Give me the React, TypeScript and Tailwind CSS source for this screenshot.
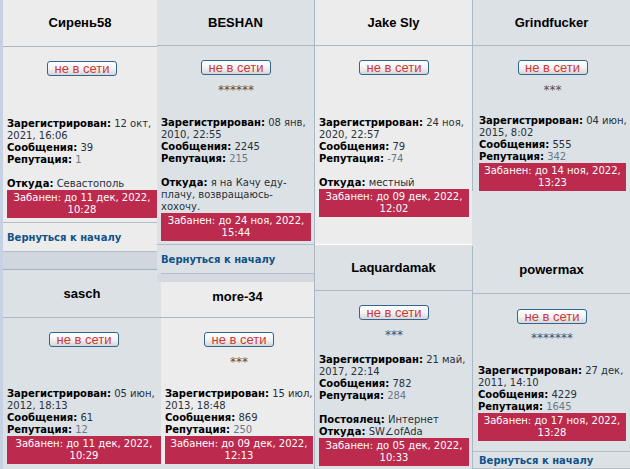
import type { ReactNode } from 'react'

interface Member {
  name: string
  rank?: string
  reg: [string, string]
  posts: string
  rep: string
  extra?: [string, string[]][]
  ban: [string, string]
}

const members: Record<string, Member> = {
  siren: {
    name: 'Сирень58',
    reg: ['12 окт,', '2021, 16:06'],
    posts: '39',
    rep: '1',
    extra: [['Откуда', ['Севастополь']]],
    ban: ['до 11 дек, 2022,', '10:28'],
  },
  sasch: {
    name: 'sasch',
    reg: ['05 июн,', '2012, 18:13'],
    posts: '61',
    rep: '12',
    ban: ['до 11 дек, 2022,', '10:29'],
  },
  beshan: {
    name: 'BESHAN',
    rank: '******',
    reg: ['08 янв,', '2010, 22:55'],
    posts: '2245',
    rep: '215',
    extra: [['Откуда', ['я на Качу еду-', 'плачу, возвращаюсь-', 'хохочу.']]],
    ban: ['до 24 ноя, 2022,', '15:44'],
  },
  more: {
    name: 'more-34',
    rank: '***',
    reg: ['15 июл,', '2013, 18:48'],
    posts: '869',
    rep: '250',
    ban: ['до 09 дек, 2022,', '12:13'],
  },
  jake: {
    name: 'Jake Sly',
    reg: ['24 ноя,', '2020, 22:57'],
    posts: '79',
    rep: '-74',
    extra: [['Откуда', ['местный']]],
    ban: ['до 09 дек, 2022,', '12:02'],
  },
  laq: {
    name: 'Laquardamak',
    rank: '***',
    reg: ['21 май,', '2017, 22:14'],
    posts: '782',
    rep: '284',
    extra: [
      ['Постоялец', ['Интернет']],
      ['Откуда', ['SW∠ofAda']],
    ],
    ban: ['до 05 дек, 2022,', '10:33'],
  },
  grind: {
    name: 'Grindfucker',
    rank: '***',
    reg: ['04 июн,', '2015, 8:02'],
    posts: '555',
    rep: '342',
    ban: ['до 14 ноя, 2022,', '13:23'],
  },
  power: {
    name: 'powermax',
    rank: '*******',
    reg: ['27 дек,', '2011, 14:10'],
    posts: '4229',
    rep: '1645',
    ban: ['до 17 ноя, 2022,', '13:28'],
  },
}

function Offline({ cls = 'pt-[14px]' }: { cls?: string }) {
  return (
    <div className={`flex justify-center ${cls}`}>
      <span className="flex h-[15px] w-[70px] items-center justify-center rounded-[3px] border border-[#2f6790] bg-linear-to-b from-white via-[#f4f4f4] to-[#d6d6d6] font-['Liberation_Sans',Arial,sans-serif] text-[13px] leading-none text-[#cc3838]">
        не в сети
      </span>
    </div>
  )
}

function Line({ label, children }: { label: string; children: ReactNode }) {
  return (
    <div>
      <b className="text-black">{label}:</b> {children}
    </div>
  )
}

function Card({
  m,
  tone,
  headCls,
  padCls,
  btnCls,
  rankCls = 'mt-[9px]',
  gapCls,
  tailCls = '',
  cls = '',
}: {
  m: Member
  tone: string
  headCls: string
  padCls: string
  btnCls?: string
  rankCls?: string
  gapCls: string
  tailCls?: string
  cls?: string
}) {
  return (
    <div className={`${tone} ${cls}`}>
      <div
        className={`flex justify-center border-b border-[#a9b8c3] font-['Liberation_Sans',Arial,sans-serif] text-[13px] font-bold text-black ${headCls}`}
      >
        {m.name}
      </div>
      <div className={`${padCls} ${tailCls}`}>
        <Offline cls={btnCls} />
        <div className={`h-[12px] text-center text-[12px] leading-[12px] text-[#505050] ${rankCls}`}>{m.rank}</div>
        <div className={`whitespace-nowrap text-[10px] leading-[12px] text-[#28313c] ${gapCls}`}>
          <Line label="Зарегистрирован">
            {m.reg[0]}
            <br />
            {m.reg[1]}
          </Line>
          <Line label="Сообщения">{m.posts}</Line>
          <Line label="Репутация">
            <span className="text-[#6b7888]">{m.rep}</span>
          </Line>
          {m.extra && (
            <div className="mt-[12px]">
              {m.extra.map(([label, lines]) => (
                <Line key={label} label={label}>
                  {lines.map((l, i) => (
                    <span key={i}>
                      {i > 0 && <br />}
                      {l}
                    </span>
                  ))}
                </Line>
              ))}
            </div>
          )}
          <div className="bg-[#bc2a4d] py-[2px] text-center text-white">
            Забанен: {m.ban[0]}
            <br />
            {m.ban[1]}
          </div>
        </div>
      </div>
    </div>
  )
}

function BackToTop({ cls }: { cls: string }) {
  return (
    <div className={`flex h-[30px] items-center border-y border-[#b3bec9] text-[10px] font-bold text-[#105289] ${cls}`}>
      Вернуться к началу
    </div>
  )
}

const LIGHT = 'bg-[#ececec]'
const BLUE = 'bg-[#dce1e5]'

export default function App() {
  return (
    <div className="flex h-[469px] w-[630px] overflow-hidden bg-[#dce1e5] font-['DejaVu_Sans',Verdana,sans-serif]">
      <div className="w-[3px] shrink-0 bg-[#c6d2e3]" />

      {/* column 1 */}
      <div className="flex w-[154px] shrink-0 flex-col">
        <Card m={members.siren} tone={LIGHT} headCls="h-[47px] items-center" padCls="pl-[4px]" gapCls="mt-[21px]" tailCls="pb-[4px]" />
        <BackToTop cls={`${LIGHT} pl-[4px]`} />
        <div className="h-[18px] shrink-0 border-b border-[#a5b2be] bg-[#d1d7de]" />
        <Card m={members.sasch} tone={BLUE} headCls="h-[48px] items-center" padCls="pl-[4px]" gapCls="mt-[20px]" cls="relative z-10 w-[158px]" />
      </div>

      {/* column 2 */}
      <div className="flex w-[157px] shrink-0 flex-col">
        <Card m={members.beshan} tone={BLUE} headCls="h-[46px] items-center" padCls="pl-[4px] pr-[3px]" gapCls="mt-[21px]" tailCls="pb-[3px]" />
        <BackToTop cls={`${BLUE} pl-[4px]`} />
        <div className="relative z-20 h-[8px] shrink-0 bg-[#d3d9df]" />
        <Card m={members.more} tone={LIGHT} headCls="h-[36px] items-start pt-[5px]" padCls="pl-[4px] pr-[1px]" rankCls="mt-[9px]" gapCls="mt-[20px]" cls="ml-[4px]" />
      </div>

      {/* column 3 */}
      <div className="flex w-[158px] shrink-0 flex-col border-l border-[#a9b8c3]">
        <Card m={members.jake} tone={LIGHT} headCls="h-[46px] items-center" padCls="pl-[4px] pr-[3px]" gapCls="mt-[21px]" tailCls="pb-[27px]" />
        <Card m={members.laq} tone={BLUE} headCls="h-[46px] items-center" padCls="pl-[4px] pr-[3px]" gapCls="mt-[13px]" cls="border-t border-white" />
      </div>

      {/* column 4 */}
      <div className="flex w-[158px] shrink-0 flex-col">
        <Card m={members.grind} tone={BLUE} headCls="h-[46px] items-center" padCls="pl-[6px] pr-[4px]" gapCls="mt-[19px]" cls="border-l border-[#a9b8c3]" />
        <div className="h-[55px] shrink-0" />
        <Card m={members.power} tone={BLUE} headCls="h-[48px] items-center" padCls="pl-[5px] pr-[4px]" btnCls="pt-[15px]" rankCls="mt-[8px]" gapCls="mt-[21px]" tailCls="pb-[10px]" cls="border-l border-[#a9b8c3]" />
        <BackToTop cls={`${BLUE} border-l border-l-[#a9b8c3] pl-[6px]`} />
      </div>
    </div>
  )
}
